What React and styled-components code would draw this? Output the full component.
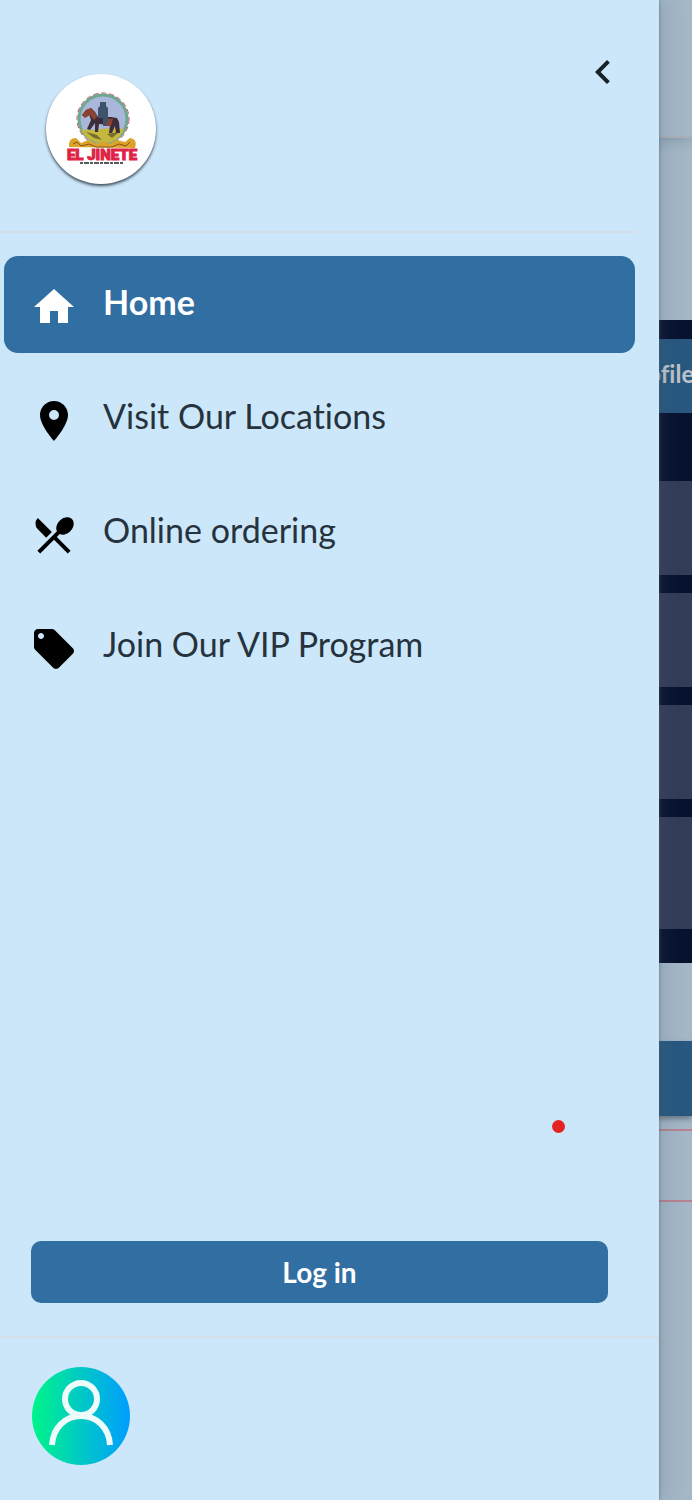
import React from "react";
import styled, { createGlobalStyle } from "styled-components";
import { MdHome, MdLocationOn, MdRestaurantMenu, MdLocalOffer, MdKeyboardArrowLeft } from "react-icons/md";

const GlobalStyle = createGlobalStyle`
  *, *::before, *::after { box-sizing: border-box; }
  body {
    margin: 0;
    background: #a3b7c7;
    font-family: Lato, "Open Sans", sans-serif;
    font-variant-ligatures: none;
  }
  button { font: inherit; border: 0; cursor: pointer; }
`;

const Shell = styled.div`
  position: relative;
  min-height: 100vh;
  display: grid;
  overflow: hidden;
`;

const Page = styled.main`
  display: flex;
  flex-direction: column;
  background: #a3b7c7;
`;

const PageHeader = styled.header`
  height: 138px;
  border-bottom: 2px solid #a9b0b7;
  box-shadow: 0 2px 12px rgba(40, 60, 80, 0.25);
`;

const Panel = styled.section`
  margin-top: 182px;
  padding: 19px 0 34px;
  background: #07122f;
`;

const ProfileTab = styled.div`
  height: 74px;
  margin-bottom: 68px;
  padding-left: calc(100% - 68px);
  overflow: hidden;
  white-space: nowrap;
  background: #28587f;
  color: #bdc3ca;
  font-size: 24px;
  font-weight: 700;
  line-height: 70px;
`;

const PanelRows = styled.div`
  display: flex;
  flex-direction: column;
  gap: 18px;
`;

const PanelRow = styled.div`
  height: ${({ $tall }) => ($tall ? 112 : 94)}px;
  background: #333c58;
`;

const PageAction = styled.div`
  height: 75px;
  margin: 78px 0 13px;
  background: #28587f;
  box-shadow: 0 3px 5px rgba(50, 60, 70, 0.5);
`;

const Outline = styled.div`
  height: 73px;
  border: solid #b9828e;
  border-width: 2px 0;
`;

const Drawer = styled.aside`
  position: absolute;
  inset: 0 33px 0 0;
  display: flex;
  flex-direction: column;
  background: #cce7fa;
  box-shadow: 0 0 3px rgba(90, 95, 100, 0.7), 3px 0 20px rgba(70, 90, 110, 0.25);
`;

const DrawerHeader = styled.header`
  display: flex;
  justify-content: space-between;
  align-items: flex-start;
  height: 233px;
  margin-right: 22px;
  padding: 48px 10px 0 46px;
  border-bottom: 2px solid #d3e0e9;
`;

const Logo = styled.div`
  width: 110px;
  height: 110px;
  margin-top: 26px;
  border-radius: 50%;
  background: #fff;
  box-shadow: 0 2px 3px rgba(20, 30, 40, 0.75);

  svg { display: block; width: 100%; height: 100%; }
`;

const CloseButton = styled.button`
  display: flex;
  padding: 0;
  background: none;
  color: #17212a;
`;

const Nav = styled.nav`
  display: flex;
  flex-direction: column;
  gap: 17px;
  padding: 23px 24px 0 4px;
`;

const NavLink = styled.a`
  display: flex;
  align-items: center;
  gap: 25px;
  height: 97px;
  padding: 4px 26px 0;
  border-radius: 14px;
  background: ${({ $active }) => ($active ? "#316ea2" : "transparent")};
  color: ${({ $active }) => ($active ? "#fff" : "#000")};
  text-decoration: none;

  svg { flex: none; }
`;

const NavLabel = styled.span`
  padding-bottom: 10px;
  color: ${({ $active }) => ($active ? "#fff" : "#26333d")};
  font-size: 34px;
  font-weight: ${({ $active }) => ($active ? 700 : 400)};
  line-height: 40px;
`;

const Middle = styled.div`
  flex: 1;
  display: flex;
  justify-content: flex-end;
  align-items: flex-end;
  padding: 0 94px 108px 0;
`;

const Dot = styled.span`
  width: 13px;
  height: 13px;
  border-radius: 50%;
  background: #e72225;
`;

const LoginButton = styled.button`
  height: 62px;
  margin: 0 51px 33px 31px;
  padding: 0;
  border-radius: 10px;
  background: #316ea2;
  color: #fff;
  font-size: 28px;
  font-weight: 700;
`;

const DrawerFooter = styled.footer`
  height: 164px;
  padding: 29px 32px;
  border-top: 2px solid #d3e0e9;
`;

const Avatar = styled.svg`
  display: block;
  width: 98px;
  height: 98px;
`;

const links = [
  { label: "Home", icon: MdHome, active: true },
  { label: "Visit Our Locations", icon: MdLocationOn },
  { label: "Online ordering", icon: MdRestaurantMenu },
  { label: "Join Our VIP Program", icon: MdLocalOffer },
];

function RestaurantLogo() {
  return (
    <Logo>
      <svg viewBox="0 0 110 110" role="img" aria-label="El Jinete">
        <circle cx="57" cy="45" r="24" fill="#a9b8da" stroke="#6ea790" strokeWidth="3" />
        <circle cx="57" cy="45" r="26" fill="none" stroke="#b95765" strokeWidth="1" strokeDasharray="5 3" />
        <path d="M35 55q10 2 21 0t22 0q-5 14-21 14T35 55z" fill="#c5b83e" />
        <path d="M40 58l11 3 5 5-8-2zM61 60l12-2-7 6z" fill="#756e2c" />
        <path d="M36 41l4-5 5-2 4 4 3 5h13l6 1 2 4 1 11h-4l-1-7-3 7h-3l1-8-11-1-1 8h-3v-9l-5 7-3-1 4-9-2-6-4 3z" fill="#3e2c3a" />
        <path d="M36 41l4-5 5-2 4 4 2 5-3 3-4-5-5 3zM60 45h7l-2 7h-5z" fill="#884333" />
        <path d="M54 28h6v4l2 2v11l-2 7h-3v-8h-5V34l2-2z" fill="#3d526b" />
        <path d="M23 73q-1-9 7-9l5 5 7-3 9 4 6-3 6 3 8-4 8 2 5-4q8 1 5 10z" fill="#dda329" />
        <path d="M27 70l4-2 4 4 8-2 7 3h16l7-3 7 2 4-4" fill="none" stroke="#80541e" strokeWidth="1" />
        <text x="56" y="86" textAnchor="middle" fontFamily="Roboto, sans-serif" fontSize="15" fontWeight="900" fill="#df2345" stroke="#df2345" strokeWidth="1">EL JINETE</text>
        <path d="M34 89h44" stroke="#58595b" strokeWidth="2" strokeDasharray="3 1 5 1" />
      </svg>
    </Logo>
  );
}

export default function App() {
  return (
    <Shell>
      <GlobalStyle />
      <Page>
        <PageHeader />
        <Panel>
          <ProfileTab>Profile</ProfileTab>
          <PanelRows>
            <PanelRow />
            <PanelRow />
            <PanelRow />
            <PanelRow $tall />
          </PanelRows>
        </Panel>
        <PageAction />
        <Outline />
      </Page>
      <Drawer>
        <DrawerHeader>
          <RestaurantLogo />
          <CloseButton type="button" aria-label="Close menu">
            <MdKeyboardArrowLeft size={48} />
          </CloseButton>
        </DrawerHeader>
        <Nav>
          {links.map(({ label, icon: Icon, active }) => (
            <NavLink key={label} href="#" $active={active} aria-current={active ? "page" : undefined}>
              <Icon size={48} />
              <NavLabel $active={active}>{label}</NavLabel>
            </NavLink>
          ))}
        </Nav>
        <Middle><Dot /></Middle>
        <LoginButton type="button">Log in</LoginButton>
        <DrawerFooter>
          <Avatar viewBox="0 0 98 98" role="img" aria-label="User">
            <defs>
              <linearGradient id="avatarFill">
                <stop offset="0" stopColor="#00f58a" />
                <stop offset="1" stopColor="#009dff" />
              </linearGradient>
            </defs>
            <circle cx="49" cy="49" r="49" fill="url(#avatarFill)" />
            <g fill="none" stroke="#edfbfa" strokeWidth="6">
              <circle cx="49" cy="32" r="16" />
              <path d="M20 78c1-17 13-29 29-29s28 12 29 29" />
            </g>
          </Avatar>
        </DrawerFooter>
      </Drawer>
    </Shell>
  );
}
